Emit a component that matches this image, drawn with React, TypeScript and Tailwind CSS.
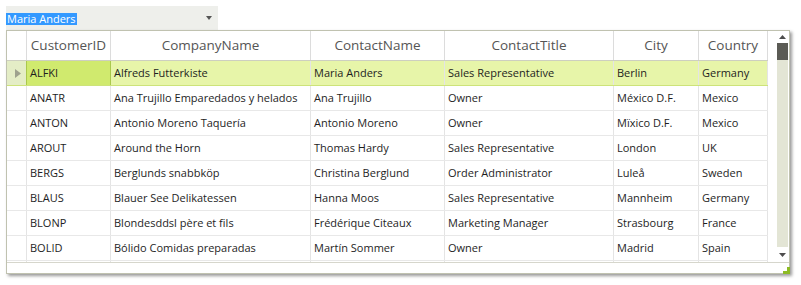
import React from "react";

type Row = [string, string, string, string, string, string];

const rows: Row[] = [
  ["ALFKI", "Alfreds Futterkiste", "Maria Anders", "Sales Representative", "Berlin", "Germany"],
  ["ANATR", "Ana Trujillo Emparedados y helados", "Ana Trujillo", "Owner", "México D.F.", "Mexico"],
  ["ANTON", "Antonio Moreno Taquería", "Antonio Moreno", "Owner", "Mïxico D.F.", "Mexico"],
  ["AROUT", "Around the Horn", "Thomas Hardy", "Sales Representative", "London", "UK"],
  ["BERGS", "Berglunds snabbköp", "Christina Berglund", "Order Administrator", "Luleå", "Sweden"],
  ["BLAUS", "Blauer See Delikatessen", "Hanna Moos", "Sales Representative", "Mannheim", "Germany"],
  ["BLONP", "Blondesddsl père et fils", "Frédérique Citeaux", "Marketing Manager", "Strasbourg", "France"],
  ["BOLID", "Bólido Comidas preparadas", "Martín Sommer", "Owner", "Madrid", "Spain"],
  ["", "", "", "", "", ""],
];

const cols = [
  { title: "CustomerID", w: "w-[84px]" },
  { title: "CompanyName", w: "w-[200px]" },
  { title: "ContactName", w: "w-[134px]" },
  { title: "ContactTitle", w: "w-[169px]" },
  { title: "City", w: "w-[85px]" },
  { title: "Country", w: "w-[69px]" },
];

function Header() {
  return (
    <div className="flex h-[30px] shrink-0 border-b border-[#cdcfc0] w-[761px]">
      <div className="w-[20px] shrink-0 border-r border-[#dcdcdc]" />
      {cols.map((c) => (
        <div
          key={c.title}
          className={`${c.w} shrink-0 border-r border-[#dcdcdc] flex items-center justify-center text-[13.5px] text-[#555555] whitespace-nowrap overflow-hidden`}
        >
          {c.title}
        </div>
      ))}
    </div>
  );
}

function DataRow({ r, selected }: { r: Row; selected: boolean }) {
  return (
    <div
      className={
        selected
          ? "flex h-[25px] shrink-0 border-b border-[#cde37a] bg-[#e7f5a9] w-[761px]"
          : "flex h-[25px] shrink-0 border-b border-[#e8e8e8] w-[761px]"
      }
    >
      <div
        className={
          selected
            ? "w-[20px] shrink-0 border-r border-[#aac84c] bg-[#e4edc6] flex items-center pl-[8px]"
            : "w-[20px] shrink-0 border-r border-[#e4e4e4] bg-white"
        }
      >
        {selected && (
          <svg width="6" height="9" viewBox="0 0 6 9">
            <polygon points="0,0 6,4.5 0,9" fill="#9ea28e" />
          </svg>
        )}
      </div>
      {r.map((v, i) => (
        <div
          key={i}
          className={`${cols[i].w} shrink-0 border-r flex items-center pl-[3px] text-[11px] text-[#1e1e1e] whitespace-nowrap overflow-hidden ${
            selected && i === 0 ? "bg-[#d0ea6e] border-[#aac84c]" : "border-[#e4e4e4]"
          }`}
        >
          {v}
        </div>
      ))}
    </div>
  );
}

function ScrollBar() {
  return (
    <div className="w-[21px] h-full shrink-0 flex flex-col pl-[9px] pr-[1px] pt-[4px]">
      <div className="w-[11px] h-[4px] flex justify-center">
        <svg width="7" height="4" viewBox="0 0 7 4">
          <polygon points="3.5,0 7,4 0,4" fill="#4d4d4d" />
        </svg>
      </div>
      <div className="w-[11px] h-[204px] mt-[4px] bg-[#e3e5d5] flex flex-col">
        <div className="h-[17px] bg-[#5b5b55]" />
      </div>
      <div className="w-[11px] h-[4px] mt-[6px] flex justify-center">
        <svg width="7" height="4" viewBox="0 0 7 4">
          <polygon points="0,0 7,0 3.5,4" fill="#4d4d4d" />
        </svg>
      </div>
    </div>
  );
}

export default function App() {
  return (
    <div className="w-[801px] h-[285px] bg-white font-['Open_Sans',sans-serif] pl-[6px] pt-[6px]">
      {/* Combo box */}
      <div className="w-[212px] h-[24px] bg-[#eeefeb] flex items-start pt-[7px] pr-[6px]">
        <span className="h-[12px] bg-[#3399ff] text-white text-[11px] leading-[12px] px-[1px] whitespace-nowrap">
          Maria Anders
        </span>
        <div className="ml-auto mt-[3px]">
          <svg width="6" height="4" viewBox="0 0 6 4">
            <polygon points="0,0 6,0 3,4" fill="#555555" />
          </svg>
        </div>
      </div>

      {/* Grid */}
      <div className="relative w-[784px] h-[244px] border border-[#c0c2b0] bg-white shadow-[2px_2px_3px_rgba(0,0,0,0.4)] flex flex-col">
        <div className="flex h-[231px] shrink-0">
          <div className="w-[761px] h-full overflow-hidden flex flex-col shrink-0">
            <Header />
            {rows.map((r, i) => (
              <DataRow key={i} r={r} selected={i === 0} />
            ))}
          </div>
          <ScrollBar />
        </div>
        <div className="h-[11px] border-t border-[#d6d6cc] shrink-0" />
        <svg
          className="absolute right-[-1px] bottom-[-1px]"
          width="7"
          height="7"
          viewBox="0 0 7 7"
        >
          <polygon points="4,0 7,0 7,7 0,7 0,4 4,4" fill="#8dbb24" />
        </svg>
      </div>
    </div>
  );
}
